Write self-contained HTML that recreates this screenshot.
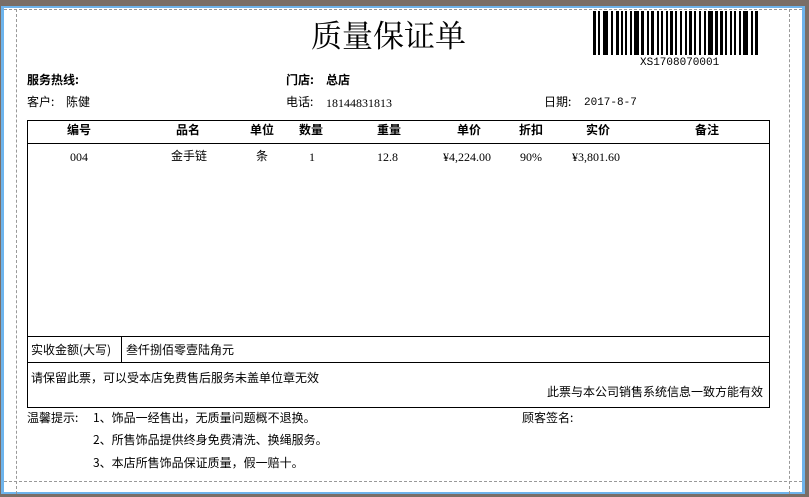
<!DOCTYPE html>
<html><head><meta charset="utf-8"><style>
body{margin:0;width:809px;height:497px;background:#7a6e66;position:relative;overflow:hidden;font-family:"Liberation Serif","SimSun","Noto Serif CJK SC",serif;color:#000}
.win{position:absolute;left:1px;top:6px;width:804px;height:488px;background:#6eb4ec}
.pg{position:absolute;left:4px;top:8px;width:798px;height:484px;background:#fff}
.a{position:absolute;white-space:nowrap;font-size:12px;line-height:14px}
.s{font-family:"Noto Sans CJK SC","WenQuanYi Zen Hei",sans-serif}
.b{font-weight:bold}
.dv{position:absolute;border-left:1px dashed #999}
.dh{position:absolute;border-top:1px dashed #999}
.bx{position:absolute;border:1px solid #000}
</style></head><body>
<div class="win"></div><div class="pg"></div>
<div class="dv" style="left:16px;top:9px;height:485px"></div>
<div class="dv" style="left:789px;top:9px;height:485px"></div>
<div class="dh" style="left:4px;top:9px;width:798px"></div>
<div class="dh" style="left:4px;top:481px;width:798px"></div>
<div class="a" style="left:311px;top:16px;font-size:31px;line-height:36px;font-family:'Noto Serif CJK SC',serif">质量保证单</div>
<svg style="position:absolute;left:593px;top:11px" width="168" height="44" id="bc"></svg>
<div class="a" style="left:640px;top:56px;font-size:11px;font-family:'Liberation Mono',monospace">XS1708070001</div>
<div class="a s b" style="left:27px;top:73px">服务热线:</div>
<div class="a s b" style="left:286px;top:73px">门店:</div>
<div class="a s b" style="left:326px;top:73px">总店</div>
<div class="a s" style="left:27px;top:95px">客户:</div>
<div class="a s" style="left:66px;top:95px">陈健</div>
<div class="a s" style="left:286px;top:95px">电话:</div>
<div class="a" style="left:326px;top:96px">18144831813</div>
<div class="a s" style="left:544px;top:95px">日期:</div>
<div class="a" style="left:584px;top:96px;font-family:'Liberation Mono';font-size:11px">2017-8-7</div>
<div class="bx" style="left:27px;top:120px;width:741px;height:286px"></div>
<div class="dh" style="left:27px;top:143px;width:742px;border-top:1px solid #000"></div>
<div class="dh" style="left:27px;top:336px;width:742px;border-top:1px solid #000"></div>
<div class="dh" style="left:27px;top:362px;width:742px;border-top:1px solid #000"></div>
<div class="dv" style="left:121px;top:336px;height:26px;border-left:1px solid #000"></div>
<div class="a s b" style="left:67px;top:123px">编号</div>
<div class="a s b" style="left:176px;top:123px">品名</div>
<div class="a s b" style="left:250px;top:123px">单位</div>
<div class="a s b" style="left:299px;top:123px">数量</div>
<div class="a s b" style="left:377px;top:123px">重量</div>
<div class="a s b" style="left:457px;top:123px">单价</div>
<div class="a s b" style="left:519px;top:123px">折扣</div>
<div class="a s b" style="left:586px;top:123px">实价</div>
<div class="a s b" style="left:695px;top:123px">备注</div>
<div class="a" style="left:70px;top:150px">004</div>
<div class="a s" style="left:171px;top:149px">金手链</div>
<div class="a s" style="left:256px;top:149px">条</div>
<div class="a" style="left:309px;top:150px">1</div>
<div class="a" style="left:377px;top:150px">12.8</div>
<div class="a" style="left:443px;top:150px">¥4,224.00</div>
<div class="a" style="left:520px;top:150px">90%</div>
<div class="a" style="left:572px;top:150px">¥3,801.60</div>
<div class="a s" style="left:31px;top:343px">实收金额(大写)</div>
<div class="a s" style="left:126px;top:343px">叁仟捌佰零壹陆角元</div>
<div class="a s" style="left:31px;top:371px">请保留此票，可以受本店免费售后服务未盖单位章无效</div>
<div class="a s" style="left:547px;top:385px">此票与本公司销售系统信息一致方能有效</div>
<div class="a s" style="left:27px;top:411px">温馨提示:</div>
<div class="a s" style="left:93px;top:411px">1、饰品一经售出，无质量问题概不退换。</div>
<div class="a s" style="left:522px;top:411px">顾客签名:</div>
<div class="a s" style="left:93px;top:433px">2、所售饰品提供终身免费清洗、换绳服务。</div>
<div class="a s" style="left:93px;top:456px">3、本店所售饰品保证质量，假一赔十。</div>
<script>
var w=[2,1,1,2,3,2,1,2,2,1,1,1,1,2,1,1,3,1,2,2,1,1,2,2,1,1,1,2,1,1,2,1,1,2,1,2,1,1,2,1,1,2,1,2,1,1,3,1,2,1,2,1,1,2,1,1,1,2,1,1,3,2,1,1,2,1,1,1,2,1];
var s='',x=0,i=0;while(x<165&&i<w.length){var k=w[i]*2-(w[i]>1?1:0);if(x+k>168)break;if(i%2==0)s+='<rect x="'+x+'" y="0" width="'+k+'" height="44"/>';x+=k;i++;}
document.getElementById('bc').innerHTML=s;
</script>
</body></html>
